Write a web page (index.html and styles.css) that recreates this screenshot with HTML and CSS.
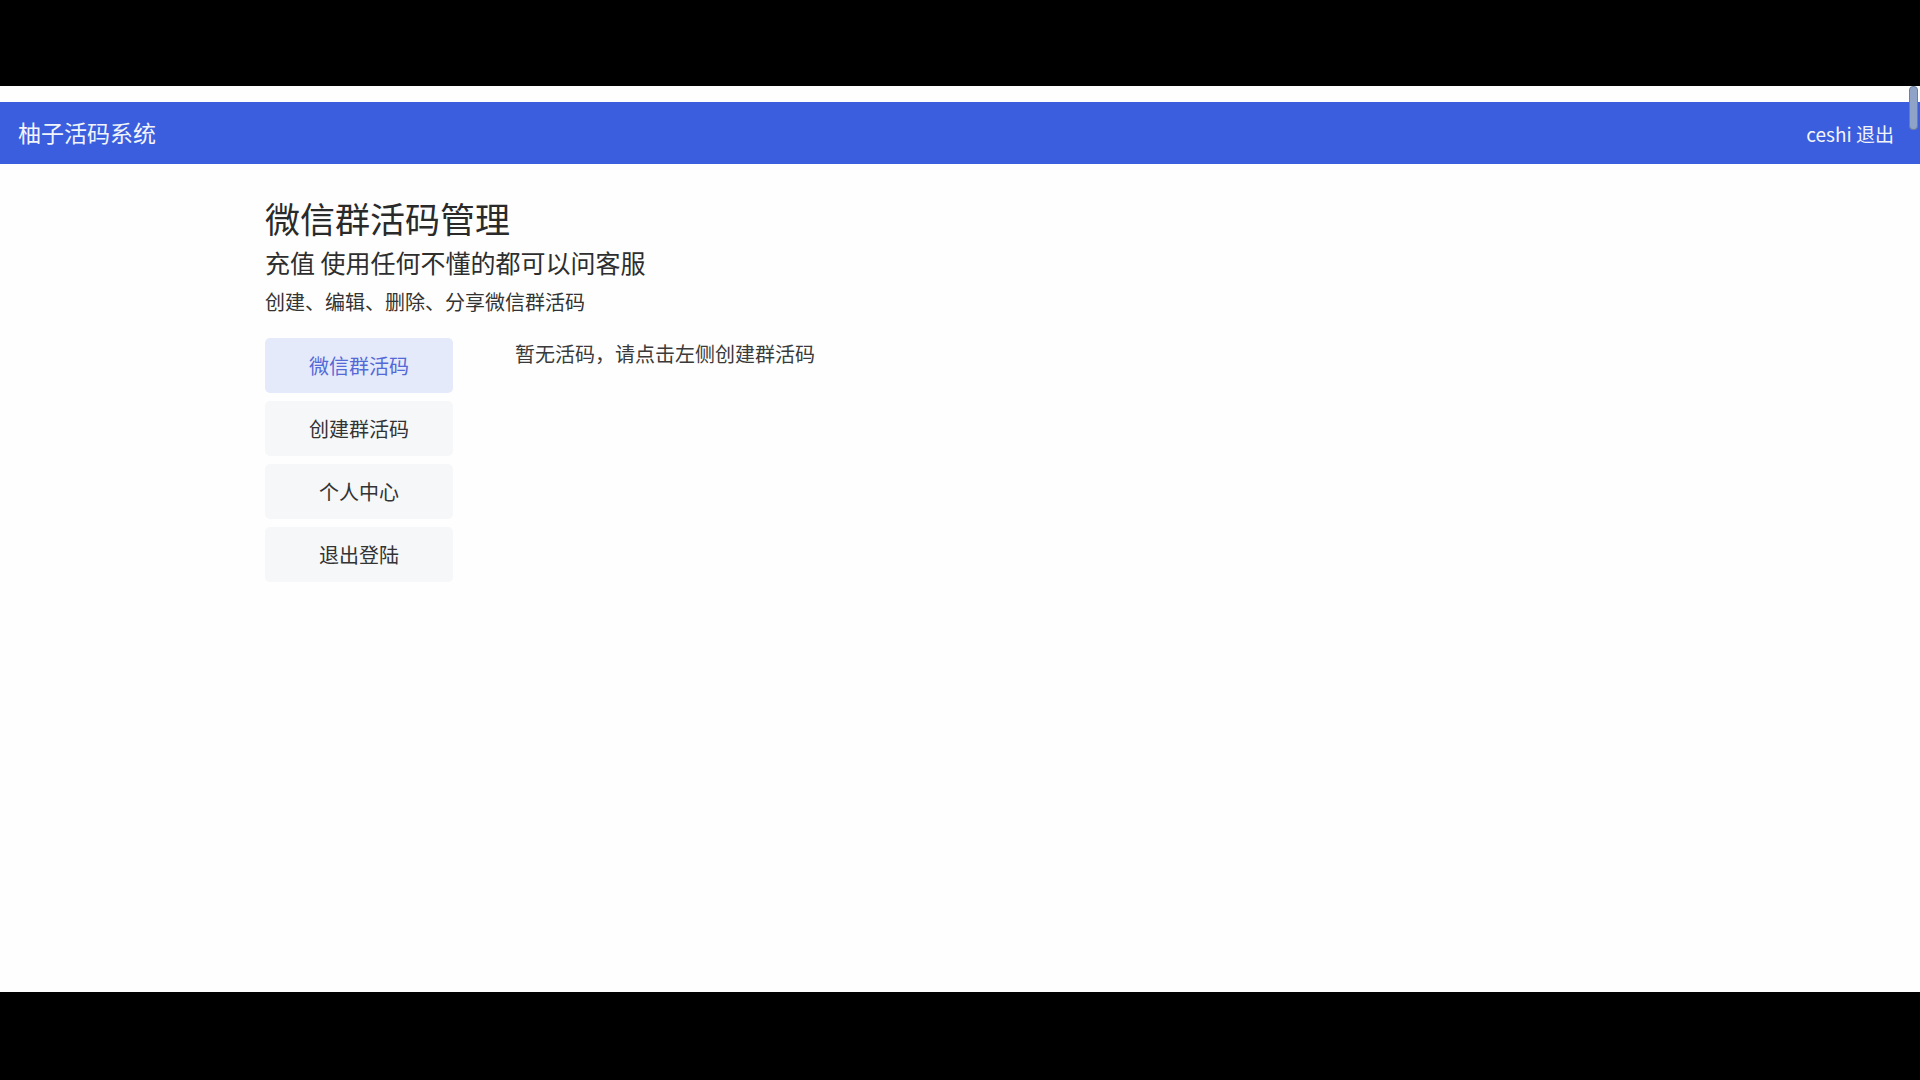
FILE: index.html
```html
<!DOCTYPE html>
<html lang="zh-CN">
<head>
    <meta charset="UTF-8">
    <meta name="viewport" content="width=device-width, initial-scale=1.0">
    <title>柚子活码系统</title>
    <link rel="stylesheet" href="styles.css">
</head>
<body>
    <div class="screen">
        <div class="page">
            <div class="scroll-thumb"></div>
            <header class="navbar">
                <div class="brand">柚子活码系统</div>
                <div class="user">ceshi 退出</div>
            </header>

            <main class="container">
                <h1>微信群活码管理</h1>
                <h2>充值 使用任何不懂的都可以问客服</h2>
                <p class="desc">创建、编辑、删除、分享微信群活码</p>

                <div class="layout">
                    <nav class="side-menu">
                        <a class="menu-item active" href="#">微信群活码</a>
                        <a class="menu-item" href="#">创建群活码</a>
                        <a class="menu-item" href="#">个人中心</a>
                        <a class="menu-item" href="#">退出登陆</a>
                    </nav>
                    <section class="content">
                        <p class="empty">暂无活码，请点击左侧创建群活码</p>
                    </section>
                </div>
            </main>
        </div>
    </div>
</body>
</html>
```

FILE: styles.css
```css
html, body {
    margin: 0;
    padding: 0;
    background: #000;
    height: 100%;
    overflow: hidden;
}
body {
    font-family: "Noto Sans CJK SC", "Noto Sans", sans-serif;
    color: #333;
}
.screen {
    padding-top: 86px;
}
.page {
    position: relative;
    background: #fdfefd;
    height: 906px;
    padding-top: 16px;
    box-sizing: border-box;
}
.scroll-thumb {
    position: absolute;
    right: 2px;
    top: 0;
    width: 7px;
    height: 42px;
    border-radius: 4px;
    background: #8fa3c8;
    border: 1px solid #6d7f9e;
}
.navbar {
    background-color: #3a5ede;
    height: 62px;
    display: flex;
    justify-content: space-between;
    align-items: center;
    padding: 0 26px 0 18px;
    color: #f2f4fb;
}
.brand {
    font-size: 23px;
    margin-top: -2px;
}
.user {
    font-size: 19px;
}
.container {
    padding: 33px 0 0 265px;
}
h1 {
    margin: 0;
    font-size: 35px;
    font-weight: 400;
    line-height: 42px;
    color: #2a2a2a;
}
h2 {
    margin: 8px 0 0;
    font-size: 25px;
    font-weight: 400;
    line-height: 30px;
    color: #2e2e2e;
}
.desc {
    margin: 12px 0 0;
    font-size: 20px;
    line-height: 25px;
    color: #333;
}
.layout {
    display: flex;
    gap: 62px;
    margin-top: 24px;
}
.side-menu {
    display: flex;
    flex-direction: column;
    gap: 8px;
    width: 188px;
}
.menu-item {
    display: flex;
    justify-content: center;
    align-items: center;
    height: 55px;
    border-radius: 5px;
    background: #f6f7f9;
    color: #333;
    text-decoration: none;
    font-size: 20px;
}
.menu-item.active {
    background: #e5eafb;
    color: #5469d6;
}
.empty {
    margin: 3px 0 0;
    font-size: 20px;
    line-height: 25px;
    color: #3a3a3a;
}
```
